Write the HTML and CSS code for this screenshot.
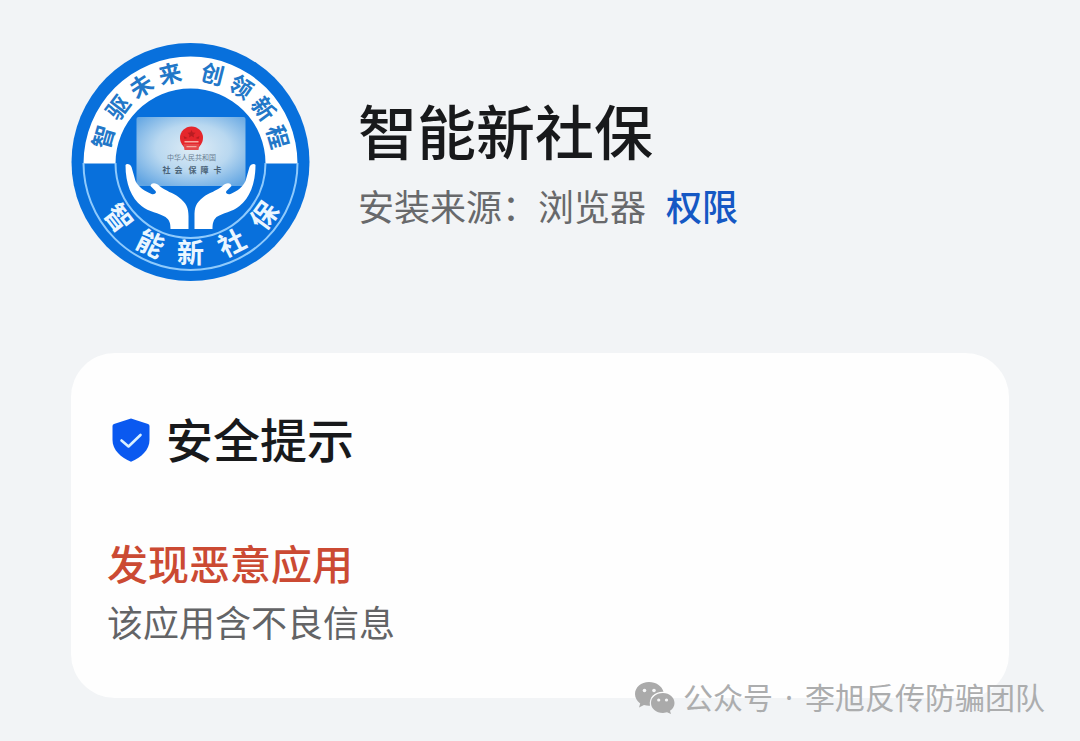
FILE: index.html
```html
<!DOCTYPE html>
<html lang="zh-CN">
<head>
<meta charset="utf-8">
<meta name="viewport" content="width=device-width, initial-scale=1">
<title>智能新社保</title>
<link rel="stylesheet" href="styles.css">
</head>
<body>
<main class="page">
  <header class="app">
    <svg class="app-logo" viewBox="0 0 238 239" role="img" aria-label="智能新社保">
      <defs>
        <radialGradient id="cardFill" cx="0.52" cy="0.45" r="0.68">
          <stop offset="0" stop-color="#dfecf5"/>
          <stop offset="0.5" stop-color="#b9d8f0"/>
          <stop offset="1" stop-color="#60a4e2"/>
        </radialGradient>
      </defs>
      <circle cx="119" cy="120" r="119" fill="#0870dc"/>
      <path d="M12 121.500A107 107 0 0 1 226 121.500H194A75 75 0 0 0 44 121.500Z" fill="#fff"/>
      <g fill="none" stroke="#8fcafc" stroke-width="2">
        <path d="M12 121A107 107 0 0 0 226 121"/>
        <path d="M44 121A75 75 0 0 0 194 121"/>
      </g>
      <g class="ring-top">
        <text transform="translate(119 120) rotate(-74) translate(0 -82)">智</text>
        <text transform="translate(119 120) rotate(-53) translate(0 -82)">驱</text>
        <text transform="translate(119 120) rotate(-33) translate(0 -82)">未</text>
        <text transform="translate(119 120) rotate(-13) translate(0 -82)">来</text>
        <text transform="translate(119 120) rotate(14) translate(0 -82)">创</text>
        <text transform="translate(119 120) rotate(34) translate(0 -82)">领</text>
        <text transform="translate(119 120) rotate(54) translate(0 -82)">新</text>
        <text transform="translate(119 120) rotate(74) translate(0 -82)">程</text>
      </g>
      <g class="ring-bottom">
        <text transform="translate(119 120) rotate(52) translate(0 101)">智</text>
        <text transform="translate(119 120) rotate(26) translate(0 101)">能</text>
        <text transform="translate(119 120) translate(0 101)">新</text>
        <text transform="translate(119 120) rotate(-27) translate(0 101)">社</text>
        <text transform="translate(119 120) rotate(-54) translate(0 101)">保</text>
      </g>
      <rect x="65" y="75" width="109" height="69" rx="2" fill="url(#cardFill)"/>
      <circle cx="120" cy="96" r="11.500" fill="#e5262c"/>
      <path d="M112 102h16l-1 6h-14z" fill="#e5484a"/>
      <g fill="#f6a9a0">
        <path d="M120 88l1.200 2.500 2.800.3-2 1.900.5 2.700-2.500-1.300-2.500 1.300.5-2.700-2-1.900 2.800-.3z" fill="#b81d22"/>
        <path d="M113 99h14v1.500h-14zM115 104h10v1.200h-10z"/>
        <path d="M112 94l4 2-3 1zM128 94l-4 2 3 1z" fill="#b81d22"/>
      </g>
      <text class="card-country" x="120" y="118">中华人民共和国</text>
      <text class="card-name" x="91 103 117 129 142" y="131">社会保障卡</text>
      <g fill="#fff">
        <path d="M54 123C55 121 59 122 60 125L64 139C67 145 73 149 80 152C84 153 86 150 83 148L79 144C80 140 85 141 88 144C94 149 102 151 107 155C115 161 117 166 117 174V187H99C99 181 98 178 94 175C88 171 77 170 70 164C60 156 54 142 54 123Z"/>
        <path d="M184 123C183 121 179 122 178 125L174 139C171 145 166 149 159 152C155 153 153 150 156 148L160 144C159 140 154 141 151 144C145 149 137 151 132 155C124 161 123 166 123 174V187H141C141 181 142 178 145 175C151 171 161 170 168 164C178 156 184 142 184 123Z"/>
      </g>
    </svg>
    <div class="app-text">
      <h1 class="app-name">智能新社保</h1>
      <p class="app-source"><span>安装来源：浏览器</span><a class="link" href="#permissions">权限</a></p>
    </div>
  </header>

  <section class="card" aria-labelledby="tips">
    <div class="card-head">
      <svg class="shield" viewBox="0 0 38 44" aria-hidden="true">
        <path d="M19 0.500L36 6Q37.500 6.500 37.500 8V22C37.500 32 29 39.500 19 43.800C9 39.500 0.500 32 0.500 22V8Q0.500 6.500 2 6Z" fill="#0a59f0"/>
        <path d="M9.500 22.500L16.500 28.500L28.500 17" fill="none" stroke="#d9f1ff" stroke-width="2.600" stroke-linecap="round" stroke-linejoin="round"/>
      </svg>
      <h2 class="card-title" id="tips">安全提示</h2>
    </div>
    <p class="alert">发现恶意应用</p>
    <p class="detail">该应用含不良信息</p>
  </section>

  <div class="watermark">
    <svg class="wechat" viewBox="0 0 40 32" aria-hidden="true">
      <path d="M14 0C6 0 0 5.500 0 12C0 16 2 19 5.200 21.500L4 25.500L9 23C11 23.600 13 24 15 23.800C13.500 15 20 9.500 28.500 9.800C27 4 21 0 14 0Z" fill="#aaa"/>
      <path d="M28 11C21 11 16 15.500 16 21C16 26.500 21 31 28 31L32 30.300L36 32L35 28.800C38 27 39.500 24 39.500 21C39.500 15.500 34.500 11 28 11Z" fill="#aaa"/>
      <g fill="#f5f6f7"><circle cx="9.500" cy="8.500" r="1.800"/><circle cx="19" cy="8.500" r="1.800"/><circle cx="23.700" cy="18" r="1.600"/><circle cx="31.500" cy="18" r="1.600"/></g>
    </svg>
    <p class="byline"><span>公众号</span><span>·</span><span>李旭反传防骗团队</span></p>
  </div>
</main>
</body>
</html>
```
FILE: styles.css
```css
* {
  box-sizing: border-box;
}

body {
  margin: 0;
  background: #f2f4f6;
  color: #18191b;
  font-family: "Noto Sans CJK SC", "Noto Sans", sans-serif;
}

h1,
h2,
p {
  margin: 0;
}

.page {
  position: relative;
  min-height: 100vh;
  padding: 42px 71px;
}

.app {
  display: flex;
  align-items: flex-start;
  gap: 48px;
  margin-bottom: 72px;
}

.app-logo {
  flex: none;
  width: 239px;
  height: 239px;
}

.ring-top,
.ring-bottom {
  font-weight: 700;
  text-anchor: middle;
}

.ring-top {
  font-size: 23px;
  fill: #2277c8;
}

.ring-bottom {
  font-size: 27px;
  fill: #eaf6ff;
}

.card-country {
  font-size: 7px;
  text-anchor: middle;
  fill: #6b7f92;
}

.card-name {
  font-size: 8px;
  font-weight: 700;
  fill: #4a6276;
}

.app-text {
  padding-top: 48px;
}

.app-name {
  font-size: 59px;
  font-weight: 500;
  line-height: 80px;
}

.app-source {
  display: flex;
  flex-wrap: wrap;
  gap: 20px;
  margin-top: 9px;
  color: #68696b;
  font-size: 36px;
  line-height: 52px;
}

.link {
  color: #1558c4;
  font-weight: 500;
  text-decoration: none;
}

.card {
  padding: 52px 36px 51px;
  border-radius: 44px;
  background: #fefefe;
}

.card-head {
  display: flex;
  align-items: center;
  gap: 16px;
  padding-left: 5px;
}

.shield {
  flex: none;
  width: 38px;
  height: 44px;
}

.card-title {
  padding-bottom: 4px;
  font-size: 47px;
  font-weight: 500;
  line-height: 66px;
}

.alert {
  margin-top: 57px;
  color: #cb4a33;
  font-size: 41px;
  font-weight: 500;
  line-height: 60px;
}

.detail {
  margin-top: 3px;
  color: #636466;
  font-size: 36px;
  line-height: 52px;
}

.watermark {
  position: absolute;
  right: 35px;
  bottom: 20px;
  display: flex;
  align-items: center;
  gap: 8px;
  color: #acadae;
  font-family: "Noto Sans", "Noto Sans CJK SC", sans-serif;
  font-size: 30px;
  line-height: 46px;
}

.byline {
  display: flex;
  gap: 12px;
}

.wechat {
  width: 40px;
  height: 32px;
}
```
